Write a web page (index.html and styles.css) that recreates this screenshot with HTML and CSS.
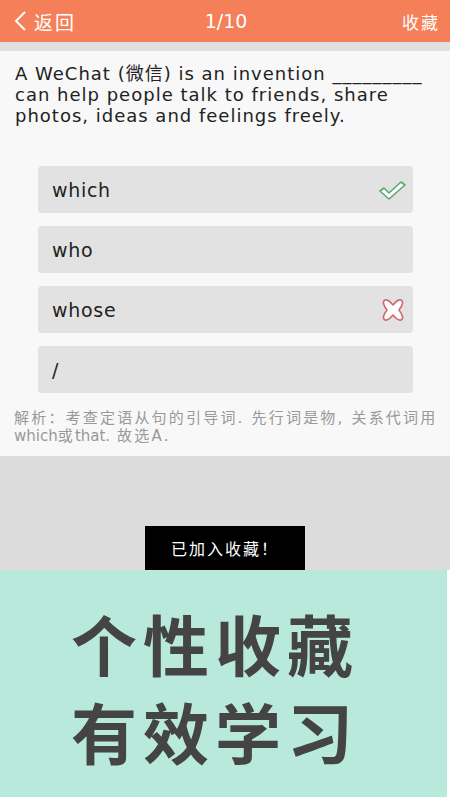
FILE: index.html
```html
<!DOCTYPE html>
<html lang="zh-CN">
<head>
    <meta charset="UTF-8">
    <meta name="viewport" content="width=device-width, initial-scale=1.0">
    <title>收藏</title>
    <link rel="stylesheet" href="styles.css">
</head>
<body>
    <div class="app">
        <header class="top-bar">
            <div class="back">
                <svg width="18" height="22" viewBox="0 0 18 22"><path d="M13 2 L4 11 L13 20" fill="none" stroke="#fff" stroke-width="2"/></svg>
                <span>返回</span>
            </div>
            <div class="count">1/10</div>
            <div class="fav">收藏</div>
        </header>
        <div class="divider"></div>

        <main class="content">
            <p class="question">A WeChat (微信) is an invention _________<br>can help people talk to friends, share<br>photos, ideas and feelings freely.</p>

            <div class="options">
                <div class="option">
                    <span>which</span>
                    <svg class="mark" width="30" height="24" viewBox="0 0 30 24">
                        <path d="M3 13 L7 10 L12 15 L24 4 L28 7 L12 21 Z" fill="#fff" stroke="#5aa86a" stroke-width="1.6" stroke-linejoin="round"/>
                    </svg>
                </div>
                <div class="option"><span>who</span></div>
                <div class="option">
                    <span>whose</span>
                    <svg class="mark" width="28" height="26" viewBox="0 0 28 26">
                        <path d="M6 3 Q9 2 14 8 Q19 2 22 3 Q26 5 20 13 Q26 21 22 23 Q19 24 14 18 Q9 24 6 23 Q2 21 8 13 Q2 5 6 3 Z" fill="#fff" stroke="#d06a6a" stroke-width="1.6" stroke-linejoin="round"/>
                    </svg>
                </div>
                <div class="option"><span>/</span></div>
            </div>

            <p class="analysis">解析：考查定语从句的引导词. 先行词是物, 关系代词用<br><span class="latin">which</span>或<span class="latin">that.</span> 故选A.</p>
        </main>

        <section class="overlay">
            <div class="toast">已加入收藏！</div>
        </section>

        <section class="promo">
            <div class="slogan">个性收藏</div>
            <div class="slogan">有效学习</div>
        </section>
    </div>
</body>
</html>
```

FILE: styles.css
```css
body {
    margin: 0;
    font-family: "DejaVu Sans", "Noto Sans CJK SC", sans-serif;
    background-color: #fff;
}

.app {
    width: 450px;
    height: 800px;
    display: flex;
    flex-direction: column;
}

.top-bar {
    height: 42px;
    background-color: #f57f58;
    color: #fff;
    display: flex;
    align-items: center;
    justify-content: space-between;
    padding: 0 10px 0 12px;
    font-size: 19px;
}

.back {
    display: flex;
    align-items: center;
    gap: 4px;
    width: 90px;
}

.back span {
    letter-spacing: 2px;
}

.count {
    font-size: 19px;
}

.fav {
    width: 90px;
    text-align: right;
    font-size: 17px;
    letter-spacing: 2px;
}

.divider {
    height: 9px;
    background-color: #e1e1e1;
}

.content {
    background-color: #f8f8f8;
    padding: 12px 0 0;
    height: 405px;
    box-sizing: border-box;
}

.question {
    margin: 0;
    padding: 0 10px 0 15px;
    font-size: 18px;
    line-height: 21px;
    color: #222;
    white-space: nowrap;
    letter-spacing: 1px;
}

.options {
    display: flex;
    flex-direction: column;
    gap: 13px;
    margin: 40px 37px 0 38px;
}

.option {
    height: 47px;
    background-color: #e2e2e2;
    border-radius: 4px;
    display: flex;
    align-items: center;
    justify-content: space-between;
    padding: 0 6px 0 14px;
    font-size: 19px;
    color: #222;
    letter-spacing: 0.7px;
}

.mark {
    display: block;
}

.analysis {
    margin: 16px 0 0;
    padding: 0 14px;
    font-size: 15px;
    line-height: 18px;
    color: #999;
    white-space: nowrap;
    letter-spacing: 2.2px;
}

.analysis .latin {
    letter-spacing: 0;
}

.overlay {
    height: 114px;
    background-color: #dcdcdc;
    display: flex;
    justify-content: center;
    align-items: flex-end;
}

.toast {
    width: 160px;
    height: 44px;
    background-color: #000;
    color: #fff;
    font-size: 16px;
    display: flex;
    align-items: center;
    justify-content: center;
    letter-spacing: 2px;
}

.promo {
    flex: 1;
    background-color: #b8e9da;
    margin: 0 3px 3px 0;
    display: flex;
    flex-direction: column;
    align-items: center;
    justify-content: center;
    padding: 4px 17px 0 0;
}

.slogan {
    font-family: "Noto Sans CJK SC", sans-serif;
    font-weight: 700;
    font-size: 66px;
    line-height: 88px;
    color: #444;
    letter-spacing: 6px;
}
```
